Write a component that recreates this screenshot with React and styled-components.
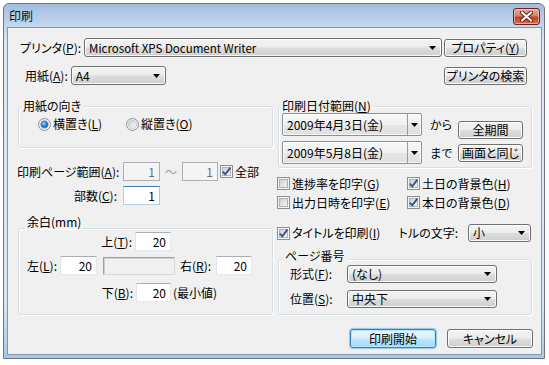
import React from 'react';
import styled, { createGlobalStyle, css } from 'styled-components';

const GlobalStyle = createGlobalStyle`
  html, body { margin: 0; padding: 0; background: #ffffff; }
  body {
    font-family: "Noto Sans CJK JP", "Noto Sans", sans-serif;
    font-size: 12px;
    color: #000;
    font-feature-settings: "palt";
  }
`;

const Page = styled.div`
  padding: 3px 0 0 3px;
`;

const Window = styled.div`
  box-sizing: border-box;
  width: 542px;
  height: 356px;
  border: 1px solid #6a7685;
  border-radius: 6px 6px 0 0;
  background: linear-gradient(#a2bedf 0px, #c2d7ee 22px, #dde8f3 40px, #d8e5f2 300px, #a9c9e8 100%);
  display: flex;
  flex-direction: column;
`;

const TitleBar = styled.div`
  height: 23px;
  display: flex;
  align-items: center;
  justify-content: space-between;
  padding: 0 4px 0 5px;
`;

const Title = styled.span`
  font-size: 12px;
  line-height: 14px;
  color: #111;
`;

const CloseBtn = styled.div`
  box-sizing: border-box;
  width: 27px;
  height: 17px;
  margin-top: 1px;
  border: 1px solid #6b2116;
  border-radius: 3px;
  background: linear-gradient(#e7a899 0%, #d9806f 45%, #c4432c 55%, #d26f55 100%);
  box-shadow: inset 0 0 0 1px rgba(255, 220, 210, 0.55);
  display: flex;
  align-items: center;
  justify-content: center;
`;

const Client = styled.div`
  flex: 1;
  margin: 0 2px 3px 3px;
  border: 1px solid #8795a8;
  background: #f0f0f0;
  display: flex;
  flex-direction: column;
  padding-top: 10px;
`;

const Row = styled.div`
  display: flex;
  align-items: ${p => p.$align || 'center'};
  height: ${p => (p.$h ? `${p.$h}px` : 'auto')};
  margin-top: ${p => p.$mt || 0}px;
  padding-left: ${p => p.$pl || 0}px;
  padding-right: ${p => p.$pr || 0}px;
`;

const Label = styled.span`
  flex: none;
  display: inline-block;
  box-sizing: border-box;
  width: ${p => (p.$w ? `${p.$w}px` : 'auto')};
  text-align: ${p => p.$ta || 'left'};
  margin-left: ${p => (p.$auto ? 'auto' : `${p.$ml || 0}px`)};
  margin-right: ${p => p.$mr || 0}px;
  white-space: nowrap;
  line-height: ${p => p.$lh || 16}px;
  color: ${p => (p.$dim ? '#a0a0a0' : '#000')};
`;

const U = styled.span`
  text-decoration: underline;
`;

const btnFace = css`
  border: 1px solid #707070;
  border-radius: 3px;
  background: linear-gradient(#f3f3f3 0%, #ececec 48%, #dddddd 52%, #cfcfcf 100%);
  box-shadow: inset 0 0 0 1px rgba(255, 255, 255, 0.85);
`;

const Button = styled.div`
  flex: none;
  box-sizing: border-box;
  width: ${p => p.$w}px;
  height: ${p => p.$h || 18}px;
  margin-left: ${p => (p.$auto ? 'auto' : `${p.$ml || 0}px`)};
  margin-top: ${p => p.$mt || 0}px;
  ${btnFace}
  display: flex;
  align-items: center;
  justify-content: center;
  white-space: nowrap;
  line-height: 16px;
  ${p => p.$default && css`
    border-color: #3c7fb1;
    background: linear-gradient(#eaf6fd 0%, #d9f0fc 48%, #bee6fd 52%, #a7d9f5 100%);
    box-shadow: inset 0 0 0 1px #b6e2fa, 0 0 1px 1px rgba(90, 170, 230, 0.6);
  `}
`;

const Select = styled.div`
  flex: ${p => (p.$grow ? '1 1 auto' : 'none')};
  box-sizing: border-box;
  width: ${p => (p.$w ? `${p.$w}px` : 'auto')};
  height: ${p => p.$h || 18}px;
  margin-left: ${p => p.$ml || 0}px;
  ${btnFace}
  display: flex;
  align-items: center;
  padding-left: 4px;
`;

const SelectText = styled.span`
  flex: 1;
  white-space: nowrap;
  line-height: 16px;
  font-size: ${p => p.$fs || 12}px;
`;

const ArrowBox = styled.span`
  flex: none;
  width: ${p => p.$w || 17}px;
  height: 100%;
  display: flex;
  align-items: center;
  justify-content: center;
  box-sizing: border-box;
  ${p => p.$split && css`border-left: 1px solid #9a9a9a;`}
`;

const Arrow = () => (
  <svg width="7" height="4" viewBox="0 0 7 4">
    <path d="M0 0H7L3.5 4Z" fill="#000" />
  </svg>
);

const DateBox = styled.div`
  flex: none;
  box-sizing: border-box;
  width: 140px;
  height: 23px;
  border: 1px solid #8f8f8f;
  border-radius: 2px;
  background: linear-gradient(#f8f8f8 0%, #f0f0f0 50%, #e6e6e6 51%, #e0e0e0 100%);
  box-shadow: inset 0 0 0 1px rgba(255, 255, 255, 0.8);
  display: flex;
  align-items: center;
  padding-left: 4px;
`;

const Input = styled.input`
  flex: none;
  box-sizing: border-box;
  width: ${p => p.$w}px;
  height: 19px;
  margin: 0 0 0 ${p => p.$ml || 0}px;
  padding: 0 4px 0 2px;
  font: inherit;
  font-feature-settings: "palt";
  text-align: right;
  color: #000;
  background: #fff;
  border: 1px solid;
  border-color: #abadb3 #e3e9ef #e3e9ef #e2e3ea;
  outline: none;
  ${p => p.$focus && css`border-color: #3d7bad #a4c9e3 #b5cfe7 #b5cfe7;`}
  &:disabled {
    background: #f4f4f4;
    border-color: #afafaf;
    color: #6d6d6d;
  }
`;

const GrayBox = styled.div`
  flex: none;
  box-sizing: border-box;
  width: ${p => p.$w}px;
  height: 18px;
  margin-left: ${p => p.$ml || 0}px;
  border: 1px solid #a0a0a0;
  border-right-color: #d8d8d8;
  border-bottom-color: #d8d8d8;
  background: #f0f0f0;
  box-shadow: inset 1px 1px 0 #cfcfcf;
`;

const Choice = styled.label`
  flex: none;
  display: flex;
  align-items: center;
  gap: 2px;
  width: ${p => (p.$w ? `${p.$w}px` : 'auto')};
  margin-left: ${p => p.$ml || 0}px;
  white-space: nowrap;
  line-height: 16px;
`;

const Check = ({ checked }) => (
  <svg width="13" height="13" viewBox="0 0 13 13">
    <defs>
      <linearGradient id="cbg" x1="0" y1="0" x2="1" y2="1">
        <stop offset="0" stopColor="#cbcfd5" />
        <stop offset="1" stopColor="#f6f6f6" />
      </linearGradient>
    </defs>
    <rect x="0.5" y="0.5" width="12" height="12" fill="#f4f4f4" stroke="#8e8f8f" />
    <rect x="2.5" y="2.5" width="8" height="8" fill="url(#cbg)" stroke="#aeb3b9" />
    {checked && (
      <path d="M2.8 6.6L5.3 9.3L10.4 2.6" fill="none" stroke="#3c4f8f" strokeWidth="1.9" />
    )}
  </svg>
);

const Radio = ({ checked }) => (
  <svg width="13" height="13" viewBox="0 0 13 13">
    <defs>
      <linearGradient id="rbg" x1="0" y1="0" x2="1" y2="1">
        <stop offset="0" stopColor="#c9ccd2" />
        <stop offset="1" stopColor="#fbfbfb" />
      </linearGradient>
      <radialGradient id="rdot" cx="0.4" cy="0.35" r="0.7">
        <stop offset="0" stopColor="#9fdcff" />
        <stop offset="0.5" stopColor="#2a8ad8" />
        <stop offset="1" stopColor="#0d4f9c" />
      </radialGradient>
    </defs>
    <circle cx="6.5" cy="6.5" r="6" fill="#f4f4f4" stroke="#8e8f8f" />
    <circle cx="6.5" cy="6.5" r="4.2" fill="url(#rbg)" stroke="#b3b6bb" strokeWidth="0.6" />
    {checked && <circle cx="6.5" cy="6.5" r="3.3" fill="url(#rdot)" stroke="#1b5a9e" strokeWidth="0.5" />}
  </svg>
);

const Columns = styled.div`
  display: grid;
  grid-template-columns: 256px 255px;
  column-gap: 4px;
  padding-left: 9px;
  margin-top: 21px;
  align-items: start;
`;

const Col = styled.div`
  display: flex;
  flex-direction: column;
`;

const Group = styled.div`
  box-sizing: border-box;
  height: ${p => p.$h}px;
  margin-left: 1px;
  margin-top: ${p => p.$mt || 0}px;
  border: 1px solid #d5dfe5;
  border-radius: 3px;
  box-shadow: inset 1px 1px 0 #ffffff, 1px 1px 0 #ffffff;
  display: flex;
  flex-direction: column;
`;

const Caption = styled.span`
  align-self: flex-start;
  line-height: 14px;
  height: 14px;
  margin: ${p => p.$lift}px 0 0 ${p => p.$indent}px;
  padding: 0 2px;
  background: #f0f0f0;
  white-space: nowrap;
`;

const CheckGrid = styled.div`
  display: grid;
  grid-template-columns: 130px 1fr;
  grid-auto-rows: 19px;
  align-items: center;
  margin-top: 6px;
`;

const Footer = styled.div`
  display: flex;
  justify-content: flex-end;
  gap: 11px;
  margin-top: 14px;
  padding-right: 8px;
`;

const CloseX = () => (
  <svg width="13" height="11" viewBox="0 0 13 11">
    <path d="M2 1.5L11 9.5M11 1.5L2 9.5" stroke="#5a1a10" strokeWidth="4" strokeLinecap="round" />
    <path d="M2 1.5L11 9.5M11 1.5L2 9.5" stroke="#ffffff" strokeWidth="2.2" strokeLinecap="round" />
  </svg>
);

export default function App() {
  return (
    <>
      <GlobalStyle />
      <Page>
        <Window>
          <TitleBar>
            <Title>印刷</Title>
            <CloseBtn><CloseX /></CloseBtn>
          </TitleBar>
          <Client>
            <Row $h={19} $pl={12} $pr={14}>
              <Label $mr={3}>プリンタ(<U>P</U>):</Label>
              <Select $grow $h={19}>
                <SelectText $fs={11.5}>Microsoft XPS Document Writer</SelectText>
                <ArrowBox><Arrow /></ArrowBox>
              </Select>
              <Button $w={83} $ml={2}>プロパティ(<U>Y</U>)</Button>
            </Row>
            <Row $h={19} $pl={17} $pr={14} $mt={9}>
              <Label $mr={3}>用紙(<U>A</U>):</Label>
              <Select $w={95} $h={19}>
                <SelectText>A4</SelectText>
                <ArrowBox><Arrow /></ArrowBox>
              </Select>
              <Button $w={83} $auto>プリンタの検索</Button>
            </Row>

            <Columns>
              <Col>
                <Group $h={42}>
                  <Caption $lift={-8} $indent={2}>用紙の向き</Caption>
                  <Row $mt={4} $h={14} $pl={19}>
                    <Choice $w={88}><Radio checked /><span>横置き(<U>L</U>)</span></Choice>
                    <Choice><Radio /><span>縦置き(<U>O</U>)</span></Choice>
                  </Row>
                </Group>

                <Row $h={19} $mt={14}>
                  <Label $w={100} $ta="right">印刷ページ範囲(<U>A</U>):</Label>
                  <Input $w={37} $ml={6} disabled defaultValue="1" />
                  <Label $w={22} $ta="center" $dim>～</Label>
                  <Input $w={36} disabled defaultValue="1" />
                  <Choice $ml={2}><Check checked /><span>全部</span></Choice>
                </Row>
                <Row $h={19} $mt={5}>
                  <Label $w={100} $ta="right">部数(<U>C</U>):</Label>
                  <Input $w={37} $ml={6} $focus defaultValue="1" />
                </Row>

                <Group $h={87} $mt={23}>
                  <Caption $lift={-14} $indent={6}>余白(mm)</Caption>
                  <Row $h={19} $mt={3} $pl={73}>
                    <Label $w={40} $ta="right">上(<U>T</U>):</Label>
                    <Input $w={36} $ml={3} defaultValue="20" />
                  </Row>
                  <Row $h={19} $mt={5}>
                    <Label $w={38} $ta="right">左(<U>L</U>):</Label>
                    <Input $w={37} $ml={3} defaultValue="20" />
                    <GrayBox $w={72} $ml={6} />
                    <Label $w={33} $ml={5}>右(<U>R</U>):</Label>
                    <Input $w={36} $ml={3} defaultValue="20" />
                  </Row>
                  <Row $h={19} $mt={8} $pl={73}>
                    <Label $w={41} $ta="right">下(<U>B</U>):</Label>
                    <Input $w={35} $ml={3} defaultValue="20" />
                    <Label $ml={2}>(最小値)</Label>
                  </Row>
                </Group>
              </Col>

              <Col>
                <Group $h={62}>
                  <Caption $lift={-8} $indent={1}>印刷日付範囲(<U>N</U>)</Caption>
                  <Row $align="flex-start" $pl={3}>
                    <DateBox>
                      <SelectText>2009年4月3日(金)</SelectText>
                      <ArrowBox $w={14} $split><Arrow /></ArrowBox>
                    </DateBox>
                    <Label $w={28} $ml={8} $lh={23}>から</Label>
                    <Button $w={65} $mt={8}>全期間</Button>
                  </Row>
                  <Row $align="flex-start" $pl={3} $mt={2}>
                    <DateBox>
                      <SelectText>2009年5月8日(金)</SelectText>
                      <ArrowBox $w={14} $split><Arrow /></ArrowBox>
                    </DateBox>
                    <Label $w={28} $ml={8} $lh={23}>まで</Label>
                    <Button $w={65} $mt={3}>画面と同じ</Button>
                  </Row>
                </Group>

                <CheckGrid>
                  <Choice><Check /><span>進捗率を印字(<U>G</U>)</span></Choice>
                  <Choice><Check checked /><span>土日の背景色(<U>H</U>)</span></Choice>
                  <Choice><Check /><span>出力日時を印字(<U>E</U>)</span></Choice>
                  <Choice><Check checked /><span>本日の背景色(<U>D</U>)</span></Choice>
                </CheckGrid>

                <Row $h={18} $mt={12} $pr={1}>
                  <Choice><Check checked /><span>タイトルを印刷(<U>I</U>)</span></Choice>
                  <Label $auto>トルの文字:</Label>
                  <Select $w={63} $ml={10}>
                    <SelectText>小</SelectText>
                    <ArrowBox><Arrow /></ArrowBox>
                  </Select>
                </Row>

                <Group $h={56} $mt={17}>
                  <Caption $lift={-11} $indent={4}>ページ番号</Caption>
                  <Row $h={18} $mt={2} $pl={11}>
                    <Label $w={57}>形式(<U>F</U>):</Label>
                    <Select $w={150}>
                      <SelectText>(なし)</SelectText>
                      <ArrowBox><Arrow /></ArrowBox>
                    </Select>
                  </Row>
                  <Row $h={18} $mt={7} $pl={11}>
                    <Label $w={57}>位置(<U>S</U>):</Label>
                    <Select $w={150}>
                      <SelectText>中央下</SelectText>
                      <ArrowBox><Arrow /></ArrowBox>
                    </Select>
                  </Row>
                </Group>
              </Col>
            </Columns>

            <Footer>
              <Button $w={86} $h={19} $default>印刷開始</Button>
              <Button $w={86} $h={19}>キャンセル</Button>
            </Footer>
          </Client>
        </Window>
      </Page>
    </>
  );
}
